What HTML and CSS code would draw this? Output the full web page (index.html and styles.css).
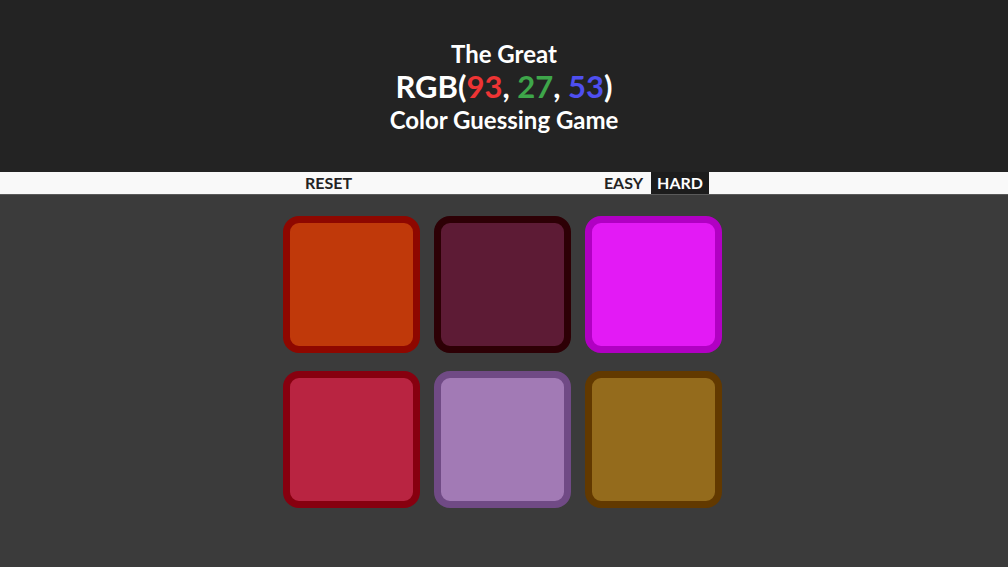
FILE: index.html
```html
<!DOCTYPE html>
<html lang="en">
<head>
<meta charset="utf-8">
<title>The Great RGB Color Guessing Game</title>
<link rel="stylesheet" href="styles.css">
</head>
<body>
<header class="header">
  <h1 class="title">
    <span class="line small">The Great</span>
    <span class="line big">RGB(<span class="r">93</span>, <span class="g">27</span>, <span class="b">53</span>)</span>
    <span class="line small">Color Guessing Game</span>
  </h1>
</header>
<nav class="nav">
  <div class="nav-inner">
    <button class="btn">RESET</button>
    <div class="modes">
      <button class="btn">EASY</button>
      <button class="btn selected">HARD</button>
    </div>
  </div>
</nav>
<main class="board">
  <div class="square" style="background:#c0390a;border-color:#8e0700"></div>
  <div class="square" style="background:#5d1b35;border-color:#2d0005"></div>
  <div class="square" style="background:#e31af5;border-color:#b100c3"></div>
  <div class="square" style="background:#b92441;border-color:#87000f"></div>
  <div class="square" style="background:#a27ab5;border-color:#704a85"></div>
  <div class="square" style="background:#946b1c;border-color:#623900"></div>
</main>
</body>
</html>
```
FILE: styles.css
```css
* { box-sizing: border-box; }
html, body { margin: 0; padding: 0; }
body {
  background: #3b3b3b;
  font-family: Lato, "Liberation Sans", sans-serif;
  height: 567px;
  overflow: hidden;
}
.header {
  background: #232323;
  height: 172px;
  padding-top: 38px;
  text-align: center;
}
.title { margin: 0; font-weight: 700; color: #fff; }
.line { display: block; }
.small { font-size: 24px; line-height: 31px; }
.big { font-size: 31px; line-height: 35px; }
.r { color: #ee3434; }
.g { color: #3ea64a; }
.b { color: #4f4ff0; }
.nav {
  background: #f9f9f9;
  height: 23px;
  border-bottom: 1px solid #5a5a5a;
}
.nav-inner {
  width: 410px;
  margin: 0 auto;
  height: 22px;
  display: flex;
  justify-content: space-between;
}
.modes { display: flex; gap: 2px; }
.btn {
  border: 0;
  background: transparent;
  font-family: Lato, "Liberation Sans", sans-serif;
  font-weight: 700;
  font-size: 16px;
  color: #232323;
  padding: 0 6px;
  height: 22px;
  line-height: 22px;
}
.selected { background: #1c1c1c; color: #fff; }
.board {
  width: 442px;
  margin: 21px auto 0;
  display: grid;
  grid-template-columns: repeat(3, 137px);
  gap: 18px 14px;
}
.square {
  width: 137px;
  height: 137px;
  border: 7px solid;
  border-radius: 16px;
}
```
